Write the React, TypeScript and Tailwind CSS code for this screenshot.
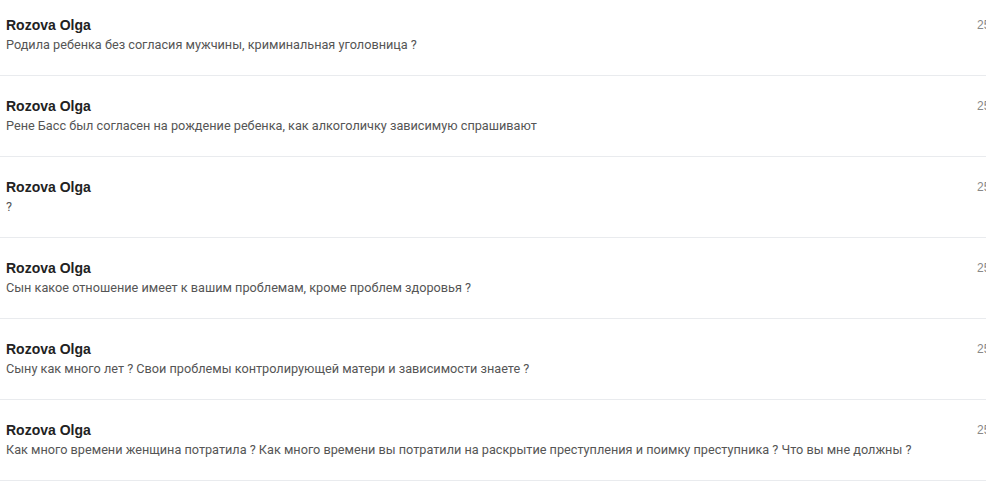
import React from "react";

const rows = [
  "Родила ребенка без согласия мужчины, криминальная уголовница ?",
  "Рене Басс был согласен на рождение ребенка, как алкоголичку зависимую спрашивают",
  "?",
  "Сын какое отношение имеет к вашим проблемам, кроме проблем здоровья ?",
  "Сыну как много лет ? Свои проблемы контролирующей матери и зависимости знаете ?",
  "Как много времени женщина потратила ? Как много времени вы потратили на раскрытие преступления и поимку преступника ? Что вы мне должны ?",
];

export default function App() {
  return (
    <div className="w-[986px] h-[500px] overflow-hidden bg-white">
      <div className="-mt-[5px] w-[1010px]">
        {rows.map((t, i) => (
          <div key={i} className="h-[81px] border-b border-[#e9ebee] flex pl-[6px] pt-[21px]">
            <div className="flex-1">
              <div
                className="text-[14px] leading-[18px] font-bold text-[#222]"
                style={{ fontFamily: '"Liberation Sans", Arial, sans-serif' }}
              >
                Rozova Olga
              </div>
              <div
                className="text-[12.7px] leading-[20px] text-[#555] mt-[1px]"
                style={{ fontFamily: 'Roboto, "Liberation Sans", sans-serif' }}
              >
                {t}
              </div>
            </div>
            <div
              className="w-[33px] text-[12px] leading-[14px] text-[#888] pt-[2px]"
              style={{ fontFamily: '"Liberation Sans", Arial, sans-serif' }}
            >
              25.04
            </div>
          </div>
        ))}
      </div>
    </div>
  );
}
